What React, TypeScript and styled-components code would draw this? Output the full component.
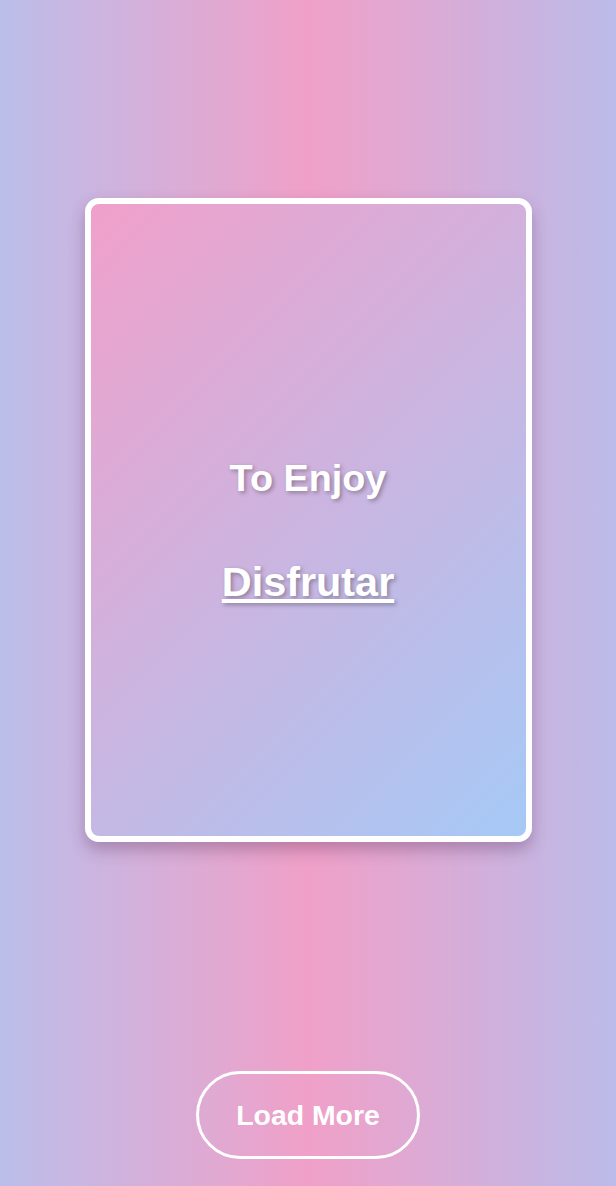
import React from "react";
import styled, { createGlobalStyle } from "styled-components";

const Global = createGlobalStyle`
  html, body { margin: 0; padding: 0; }
  body {
    font-family: "Liberation Sans", Arial, sans-serif;
    background: linear-gradient(to right, #bbbeea 0%, #f0a0c8 50%, #bbbbe9 100%);
    min-height: 100vh;
  }
`;

const Page = styled.div`
  min-height: 1186px;
  display: flex;
  flex-direction: column;
  align-items: center;
  padding-top: 198px;
  box-sizing: border-box;
`;

const Card = styled.div`
  width: 447px;
  height: 644px;
  box-sizing: border-box;
  border: 6px solid #ffffff;
  border-radius: 14px;
  background: linear-gradient(135deg, #f0a0ca 0%, #a6c9f6 100%);
  box-shadow: 0 8px 16px rgba(80, 40, 80, 0.32);
  display: flex;
  flex-direction: column;
  align-items: center;
  justify-content: center;
  gap: 56px;
  padding-top: 24px;
`;

const Word = styled.div<{ $size: number; $underline?: boolean }>`
  color: #ffffff;
  font-weight: 700;
  font-size: ${(p) => p.$size}px;
  line-height: 1.2;
  text-decoration: ${(p) => (p.$underline ? "underline" : "none")};
  text-shadow: 2px 2px 4px rgba(0, 0, 0, 0.3);
`;

const LoadButton = styled.button`
  margin-top: 229px;
  width: 224px;
  height: 88px;
  box-sizing: border-box;
  border: 3px solid #ffffff;
  border-radius: 44px;
  background: transparent;
  color: #ffffff;
  font-family: "Liberation Sans", Arial, sans-serif;
  font-weight: 700;
  font-size: 28.4px;
  cursor: pointer;
`;

export default function App() {
  return (
    <>
      <Global />
      <Page>
        <Card>
          <Word $size={37.8}>To Enjoy</Word>
          <Word $size={41.4} $underline>
            Disfrutar
          </Word>
        </Card>
        <LoadButton>Load More</LoadButton>
      </Page>
    </>
  );
}
